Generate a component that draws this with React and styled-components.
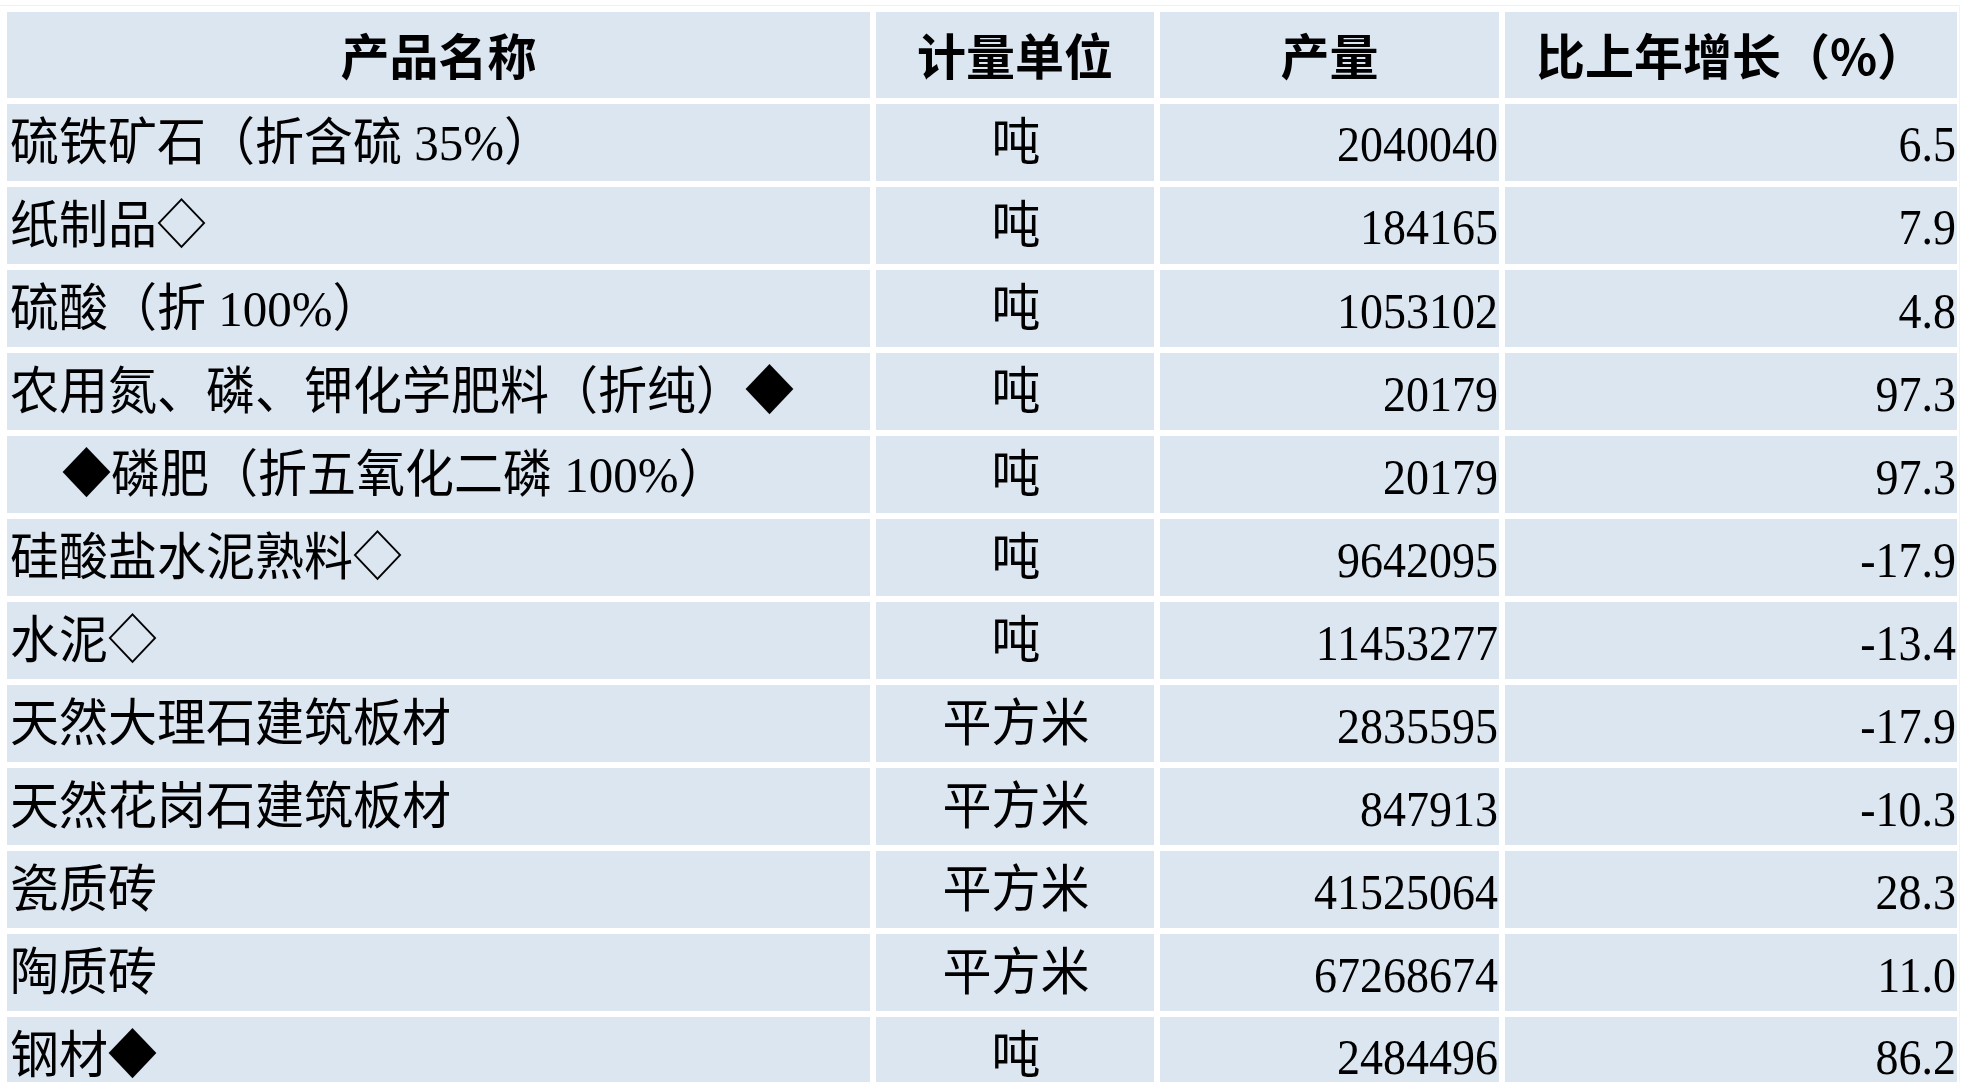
import React from "react";
import styled, { createGlobalStyle } from "styled-components";

const GlobalStyle = createGlobalStyle`
  html, body {
    margin: 0;
    padding: 0;
    background: #ffffff;
    overflow: hidden;
  }
  body {
    font-family: "Liberation Serif", "Noto Sans CJK SC", serif;
    color: #000;
  }
`;

const rows = [
  { name: "硫铁矿石（折含硫 35%）", unit: "吨", output: "2040040", growth: "6.5" },
  { name: "纸制品◇", unit: "吨", output: "184165", growth: "7.9" },
  { name: "硫酸（折 100%）", unit: "吨", output: "1053102", growth: "4.8" },
  { name: "农用氮、磷、钾化学肥料（折纯）◆", unit: "吨", output: "20179", growth: "97.3" },
  { name: "◆磷肥（折五氧化二磷 100%）", unit: "吨", output: "20179", growth: "97.3", sub: true },
  { name: "硅酸盐水泥熟料◇", unit: "吨", output: "9642095", growth: "-17.9" },
  { name: "水泥◇", unit: "吨", output: "11453277", growth: "-13.4" },
  { name: "天然大理石建筑板材", unit: "平方米", output: "2835595", growth: "-17.9" },
  { name: "天然花岗石建筑板材", unit: "平方米", output: "847913", growth: "-10.3" },
  { name: "瓷质砖", unit: "平方米", output: "41525064", growth: "28.3" },
  { name: "陶质砖", unit: "平方米", output: "67268674", growth: "11.0" },
  { name: "钢材◆", unit: "吨", output: "2484496", growth: "86.2" },
];

export default function App() {
  return (
    <>
      <GlobalStyle />
      <Frame>
        <Sheet>
          <HeadCell>产品名称</HeadCell>
          <HeadCell>计量单位</HeadCell>
          <HeadCell>产量</HeadCell>
          <HeadCell>比上年增长（%）</HeadCell>
          {rows.map((row, i) => (
            <React.Fragment key={i}>
              <Cell $indent={row.sub}>
                <Text>{row.name}</Text>
              </Cell>
              <Cell $align="center">
                <Text>{row.unit}</Text>
              </Cell>
              <Cell $align="flex-end">
                <Num>{row.output}</Num>
              </Cell>
              <Cell $align="flex-end">
                <Num>{row.growth}</Num>
              </Cell>
            </React.Fragment>
          ))}
        </Sheet>
      </Frame>
    </>
  );
}

const Frame = styled.div`
  margin-top: 5px;
  width: 1960px;
  border-top: 1px solid #eef0f2;
  border-right: 1px solid #f2f4f6;
  padding: 6px 0 0 7px;
  box-sizing: border-box;
`;

const Sheet = styled.div`
  display: grid;
  grid-template-columns: 863px 278px 339px 452px;
  grid-template-rows: 86px repeat(12, 77px);
  gap: 6px;
`;

const HeadCell = styled.div`
  display: flex;
  align-items: center;
  justify-content: center;
  background: #dce6f1;
  font-family: "Noto Sans CJK SC", sans-serif;
  font-weight: 700;
  font-size: 49px;
  line-height: 1;
  padding-bottom: 4px;
  box-sizing: border-box;
`;

const Cell = styled.div`
  display: flex;
  align-items: center;
  justify-content: ${(p) => p.$align || "flex-start"};
  background: #dce6f1;
  padding: 0 1px 0 ${(p) => (p.$indent ? "55px" : "3px")};
  white-space: nowrap;
  overflow: hidden;
  box-sizing: border-box;
`;

const Text = styled.span`
  font-family: "Liberation Serif", "Noto Sans CJK SC", serif;
  font-size: 49px;
  line-height: 1;
  display: inline-block;
  transform: scaleY(1.05);
`;

const Num = styled.span`
  font-family: "Liberation Serif", serif;
  font-size: 46px;
  line-height: 1;
  display: inline-block;
  transform: scaleY(1.1);
  margin-top: 4px;
`;
